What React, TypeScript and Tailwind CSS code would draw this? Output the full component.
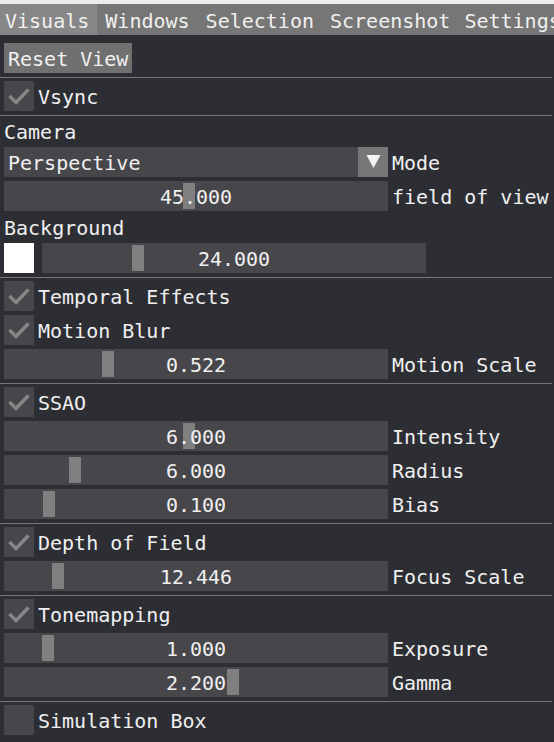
import type { ReactNode } from "react";

const menu = ["Visuals", "Windows", "Selection", "Screenshot", "Settings"];

const Separator = () => <div className="-ml-[4px] -mb-[1px] h-px w-[552px] bg-[#76767a]" />;

const Check = ({ label, checked = true }: { label: string; checked?: boolean }) => (
  <div className="flex h-[30px] gap-[4px]">
    <div className="h-[30px] w-[30px] bg-[#47474b]">
      {checked && (
        <svg width="30" height="30" viewBox="0 0 30 30">
          <polyline points="5.5,15 12,21.5 24.5,8.5" fill="none" stroke="#858585" strokeWidth="3.5" />
        </svg>
      )}
    </div>
    <span className="whitespace-nowrap pt-[4px]">{label}</span>
  </div>
);

const Slider = ({ value, grab, width = 384 }: { value: string; grab: number; width?: number }) => (
  <div className="relative flex h-[30px] shrink-0 justify-center bg-[#47474b] pt-[4px]" style={{ width }}>
    <div className="absolute top-[2px] h-[26px] w-[12px] bg-[#7f7f7f]" style={{ left: grab }} />
    <span className="relative">{value}</span>
  </div>
);

const Row = ({ children, label }: { children: ReactNode; label?: string }) => (
  <div className="flex h-[30px] gap-[4px] whitespace-nowrap">
    {children}
    {label && <span className="pt-[4px]">{label}</span>}
  </div>
);

export default function App() {
  return (
    <div className="h-[742px] w-[554px] overflow-hidden bg-[#2d2e33] font-['DejaVu_Sans_Mono',monospace] text-[20px] leading-[24px] text-[#f0f0f0]">
      <div className="h-[4px] bg-[#ececec]" />

      {/* Menu bar */}
      <div className="flex h-[31px] bg-[#767676] whitespace-nowrap">
        {menu.map((m, i) => (
          <span
            key={m}
            className={
              i === 0
                ? "bg-[#878787] pl-[5px] pr-[8px] pt-[5px]"
                : i === menu.length - 1
                  ? "-ml-[2px] px-[8px] pt-[5px]"
                  : "px-[8px] pt-[5px]"
            }
          >
            {m}
          </span>
        ))}
      </div>

      <div className="flex flex-col gap-[4px] px-[4px] pt-[8px]">
        <div className="flex">
          <div className="h-[30px] bg-[#707070] px-[4px] pt-[4px]">Reset View</div>
        </div>
        <Separator />
        <Check label="Vsync" />
        <Separator />

        <div className="h-[24px] pt-[1px]">Camera</div>
        <Row label="Mode">
          <div className="flex h-[30px] w-[384px]">
            <div className="flex-1 bg-[#47474b] pl-[4px] pt-[4px]">Perspective</div>
            <div className="h-[30px] w-[30px] bg-[#777777]">
              <svg width="30" height="30" viewBox="0 0 30 30">
                <polygon points="8.5,8 22.5,8 15.5,21" fill="#f4f4f4" />
              </svg>
            </div>
          </div>
        </Row>
        <Row label="field of view">
          <Slider value="45.000" grab={179} />
        </Row>
        <div className="h-[24px] pt-[1px]">Background</div>
        <div className="flex h-[30px] gap-[8px]">
          <div className="h-[30px] w-[30px] bg-white" />
          <Slider value="24.000" grab={90} />
        </div>
        <Separator />

        <Check label="Temporal Effects" />
        <Check label="Motion Blur" />
        <Row label="Motion Scale">
          <Slider value="0.522" grab={98} />
        </Row>
        <Separator />

        <Check label="SSAO" />
        <Row label="Intensity">
          <Slider value="6.000" grab={179} />
        </Row>
        <Row label="Radius">
          <Slider value="6.000" grab={65} />
        </Row>
        <Row label="Bias">
          <Slider value="0.100" grab={39} />
        </Row>
        <Separator />

        <Check label="Depth of Field" />
        <Row label="Focus Scale">
          <Slider value="12.446" grab={48} />
        </Row>
        <Separator />

        <Check label="Tonemapping" />
        <Row label="Exposure">
          <Slider value="1.000" grab={38} />
        </Row>
        <Row label="Gamma">
          <Slider value="2.200" grab={223} />
        </Row>
        <Separator />

        <Check label="Simulation Box" checked={false} />
      </div>
    </div>
  );
}
